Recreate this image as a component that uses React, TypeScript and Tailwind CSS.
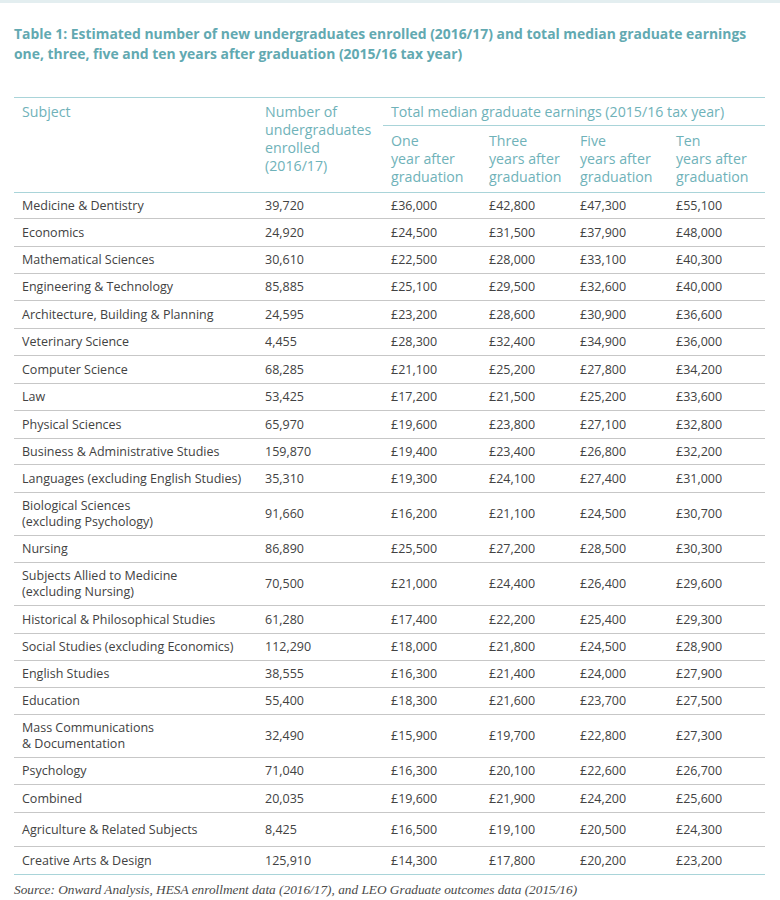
import React from "react";

type Row = { s: string[]; n: string; v: string[]; h: number };

const rows: Row[] = [
  { s: ["Medicine & Dentistry"], n: "39,720", v: ["£36,000", "£42,800", "£47,300", "£55,100"], h: 26 },
  { s: ["Economics"], n: "24,920", v: ["£24,500", "£31,500", "£37,900", "£48,000"], h: 28 },
  { s: ["Mathematical Sciences"], n: "30,610", v: ["£22,500", "£28,000", "£33,100", "£40,300"], h: 27 },
  { s: ["Engineering & Technology"], n: "85,885", v: ["£25,100", "£29,500", "£32,600", "£40,000"], h: 27 },
  { s: ["Architecture, Building & Planning"], n: "24,595", v: ["£23,200", "£28,600", "£30,900", "£36,600"], h: 28 },
  { s: ["Veterinary Science"], n: "4,455", v: ["£28,300", "£32,400", "£34,900", "£36,000"], h: 27 },
  { s: ["Computer Science"], n: "68,285", v: ["£21,100", "£25,200", "£27,800", "£34,200"], h: 28 },
  { s: ["Law"], n: "53,425", v: ["£17,200", "£21,500", "£25,200", "£33,600"], h: 27 },
  { s: ["Physical Sciences"], n: "65,970", v: ["£19,600", "£23,800", "£27,100", "£32,800"], h: 28 },
  { s: ["Business & Administrative Studies"], n: "159,870", v: ["£19,400", "£23,400", "£26,800", "£32,200"], h: 26 },
  { s: ["Languages (excluding English Studies)"], n: "35,310", v: ["£19,300", "£24,100", "£27,400", "£31,000"], h: 28 },
  { s: ["Biological Sciences", "(excluding Psychology)"], n: "91,660", v: ["£16,200", "£21,100", "£24,500", "£30,700"], h: 43 },
  { s: ["Nursing"], n: "86,890", v: ["£25,500", "£27,200", "£28,500", "£30,300"], h: 27 },
  { s: ["Subjects Allied to Medicine", "(excluding Nursing)"], n: "70,500", v: ["£21,000", "£24,400", "£26,400", "£29,600"], h: 43 },
  { s: ["Historical & Philosophical Studies"], n: "61,280", v: ["£17,400", "£22,200", "£25,400", "£29,300"], h: 28 },
  { s: ["Social Studies (excluding Economics)"], n: "112,290", v: ["£18,000", "£21,800", "£24,500", "£28,900"], h: 27 },
  { s: ["English Studies"], n: "38,555", v: ["£16,300", "£21,400", "£24,000", "£27,900"], h: 27 },
  { s: ["Education"], n: "55,400", v: ["£18,300", "£21,600", "£23,700", "£27,500"], h: 27 },
  { s: ["Mass Communications", "& Documentation"], n: "32,490", v: ["£15,900", "£19,700", "£22,800", "£27,300"], h: 43 },
  { s: ["Psychology"], n: "71,040", v: ["£16,300", "£20,100", "£22,600", "£26,700"], h: 27 },
  { s: ["Combined"], n: "20,035", v: ["£19,600", "£21,900", "£24,200", "£25,600"], h: 28 },
  { s: ["Agriculture & Related Subjects"], n: "8,425", v: ["£16,500", "£19,100", "£20,500", "£24,300"], h: 34 },
  { s: ["Creative Arts & Design"], n: "125,910", v: ["£14,300", "£17,800", "£20,200", "£23,200"], h: 28 },
];

const cols = "grid grid-cols-[243px_126px_98px_91px_96px_97px]";
const cols4 = "grid grid-cols-[98px_91px_96px_97px]";

export default function App() {
  return (
    <div className="w-[780px] h-[900px] bg-white overflow-hidden" style={{ fontFamily: "'Open Sans', 'Liberation Sans', sans-serif" }}>
      <div className="h-[3px] bg-[#e3eef0]" />
      <div className="px-[14px] pt-[21px]">
        <h1 className="text-[13.9px] leading-[19.5px] font-bold text-[#62a9b1] whitespace-nowrap">
          Table 1: Estimated number of new undergraduates enrolled (2016/17) and total median graduate earnings
          <br />
          one, three, five and ten years after graduation (2015/16 tax year)
        </h1>
        <div className="mt-[34px] w-[751px]">
          <div className={`${cols} border-t-[1.5px] border-b-[1.5px] border-[#a9d4d9] text-[14.2px] leading-[18px] text-[#6fb2b9]`}>
            <div className="pl-2 pt-[5px]">Subject</div>
            <div className="pl-2 pt-[5px]">
              Number of
              <br />
              undergraduates
              <br />
              enrolled
              <br />
              (2016/17)
            </div>
            <div className="col-span-4">
              <div className="pl-2 pt-[5px] pb-[4px] border-b-[1.5px] border-[#a9d4d9]">
                Total median graduate earnings (2015/16 tax year)
              </div>
              <div className={`${cols4} pt-[6px] pb-[6px]`}>
                <div className="pl-2">One<br />year after<br />graduation</div>
                <div className="pl-2">Three<br />years after<br />graduation</div>
                <div className="pl-2">Five<br />years after<br />graduation</div>
                <div className="pl-2">Ten<br />years after<br />graduation</div>
              </div>
            </div>
          </div>
          {rows.map((r, i) => (
            <div
              key={i}
              className={`${cols} items-center text-[12.5px] leading-[16px] text-[#424242] border-b ${
                i === rows.length - 1 ? "border-[#a9d4d9] border-b-[1.5px]" : "border-[#c7c7c7]"
              }`}
              style={{ height: r.h }}
            >
              <div className="pl-2">
                {r.s.map((t, j) => (
                  <div key={j}>{t}</div>
                ))}
              </div>
              <div className="pl-2">{r.n}</div>
              {r.v.map((v, j) => (
                <div key={j} className="pl-2">
                  {v}
                </div>
              ))}
            </div>
          ))}
        </div>
        <p
          className="mt-[5px] text-[13.3px] italic text-[#4a4a4a]"
          style={{ fontFamily: "'Liberation Serif', serif" }}
        >
          Source: Onward Analysis, HESA enrollment data (2016/17), and LEO Graduate outcomes data (2015/16)
        </p>
      </div>
    </div>
  );
}
